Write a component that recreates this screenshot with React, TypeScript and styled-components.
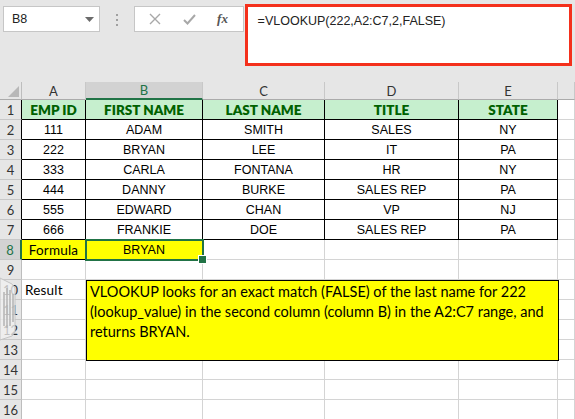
import type { FC, ReactElement } from "react";
import styled, { createGlobalStyle, css } from "styled-components";

const GlobalStyle = createGlobalStyle`
    * { box-sizing: border-box; }
    body {
        margin: 0;
        background: #ffffff;
        overflow: hidden;
        font-family: "Liberation Sans", Arial, sans-serif;
    }
`;

const GREEN = "#217346";
const GRID = "#d4d4d4";

const Page = styled.div`
    position: relative;
    width: 575px;
    height: 419px;
    overflow: hidden;
    background: #ffffff;
`;

const TopBar = styled.div`
    display: flex;
    align-items: flex-start;
    height: 82px;
    padding: 4px 3px 0 3px;
    background: #e6e6e6;
`;

const NameBox = styled.div`
    display: flex;
    align-items: center;
    justify-content: space-between;
    width: 97px;
    height: 26px;
    margin-top: 2px;
    padding: 0 5px 0 8px;
    background: #ffffff;
    border: 1px solid #c6c6c6;
    font-size: 12.5px;
    color: #222;
`;

const Dots = styled.div`
    display: flex;
    flex-direction: column;
    align-items: center;
    gap: 3px;
    width: 34px;
    margin-top: 10px;

    span {
        width: 2px;
        height: 2px;
        background: #a0a0a0;
    }
`;

const FxBox = styled.div`
    display: flex;
    align-items: center;
    justify-content: space-around;
    width: 110px;
    height: 26px;
    margin-top: 2px;
    padding: 0 4px;
    background: #ffffff;
    border: 1px solid #c6c6c6;
`;

const Fx = styled.span`
    font-family: "Liberation Serif", "Times New Roman", serif;
    font-style: italic;
    font-weight: 700;
    font-size: 13px;
    color: #555;
`;

const FormulaInput = styled.div`
    width: 328px;
    height: 62px;
    margin-left: 1px;
    padding: 7px 0 0 10px;
    background: #ffffff;
    border: 3px solid #f4301c;
    font-size: 12.5px;
    color: #222;
`;

const Sheet = styled.div`
    display: grid;
    grid-template-columns: 22px 64px 117px 122px 134px 99px 1fr;
    grid-template-rows: 18px;
    grid-auto-rows: 20px;
`;

const Corner = styled.div`
    position: relative;
    background: #e6e6e6;
    border-right: 1px solid #bdbdbd;
    border-bottom: 1px solid #ababab;

    &::after {
        content: "";
        position: absolute;
        right: 2px;
        bottom: 2px;
        border-left: 11px solid transparent;
        border-bottom: 11px solid #b8b8b8;
    }
`;

const ColHead = styled.div<{ $selected?: boolean }>`
    display: flex;
    align-items: center;
    justify-content: center;
    background: #e6e6e6;
    border-right: 1px solid #c8c8c8;
    border-bottom: 1px solid #ababab;
    font-family: Lato, "Liberation Sans", sans-serif;
    font-size: 13px;
    color: #333;

    ${({ $selected }) => $selected && css`
        background: #d2d2d2;
        color: ${GREEN};
        border-bottom: 2px solid ${GREEN};
    `}
`;

const RowHead = styled.div<{ $selected?: boolean; $edge?: boolean }>`
    display: flex;
    align-items: center;
    justify-content: center;
    background: #e6e6e6;
    border-right: 1px solid ${({ $edge }) => ($edge ? "#000" : "#bdbdbd")};
    border-bottom: 1px solid #c8c8c8;
    font-family: Lato, "Liberation Sans", sans-serif;
    font-size: 13px;
    color: #333;

    ${({ $selected }) => $selected && css`
        background: #d2d2d2;
        color: ${GREEN};
        border-right: 2px solid ${GREEN};
    `}
`;

type Tone = "plain" | "head" | "yellow";

const Cell = styled.div<{ $tone?: Tone; $edge?: boolean; $left?: boolean; $selected?: boolean; $label?: boolean }>`
    position: relative;
    display: flex;
    align-items: center;
    justify-content: ${({ $left }) => ($left ? "flex-start" : "center")};
    padding: 0 3px;
    border-right: 1px solid ${({ $edge }) => ($edge ? "#000" : GRID)};
    border-bottom: 1px solid ${({ $edge }) => ($edge ? "#000" : GRID)};
    font-size: 12.5px;
    color: #000;
    white-space: nowrap;
    background: ${({ $tone }) =>
        $tone === "head" ? "#c6efce" : $tone === "yellow" ? "#ffff00" : "#ffffff"};

    ${({ $label }) => $label && css`
        font-family: Lato, "Liberation Sans", sans-serif;
        font-size: 13.5px;
        letter-spacing: 0.2px;
    `}

    ${({ $tone }) => $tone === "head" && css`
        font-family: Lato, "Liberation Sans", sans-serif;
        font-weight: 800;
        font-size: 13.5px;
        color: #006100;
    `}

    ${({ $selected }) => $selected && css`
        z-index: 1;

        &::after {
            content: "";
            position: absolute;
            left: -1px;
            top: -1px;
            right: -2px;
            bottom: -2px;
            border: 2px solid ${GREEN};
        }

        &::before {
            content: "";
            position: absolute;
            right: -5px;
            bottom: -5px;
            width: 7px;
            height: 7px;
            background: ${GREEN};
            border: 1px solid #fff;
            z-index: 2;
        }
    `}
`;

const Note = styled.div`
    position: absolute;
    left: 86px;
    top: 280px;
    width: 473px;
    height: 81px;
    padding: 1px 3px;
    background: #ffff00;
    border: 1px solid #000;
    font-family: Lato, "Liberation Sans", sans-serif;
    font-size: 14.5px;
    line-height: 20px;
    color: #000;
`;

const PaneGrip = styled.svg`
    position: absolute;
    left: 0;
    top: 276px;
`;

const columns = ["A", "B", "C", "D", "E", ""];

const table: string[][] = [
    ["EMP ID", "FIRST NAME", "LAST NAME", "TITLE", "STATE"],
    ["111", "ADAM", "SMITH", "SALES", "NY"],
    ["222", "BRYAN", "LEE", "IT", "PA"],
    ["333", "CARLA", "FONTANA", "HR", "NY"],
    ["444", "DANNY", "BURKE", "SALES REP", "PA"],
    ["555", "EDWARD", "CHAN", "VP", "NJ"],
    ["666", "FRANKIE", "DOE", "SALES REP", "PA"],
];

const renderRow = (row: number): ReactElement[] => {
    const cells: ReactElement[] = [];
    const inTable = row <= table.length;

    cells.push(
        <RowHead key={`h${row}`} $edge={inTable} $selected={row === 8}>
            {row}
        </RowHead>
    );

    for (let c = 0; c < 6; c++) {
        const key = `${row}-${c}`;

        if (inTable && c < 5) {
            cells.push(
                <Cell key={key} $edge $tone={row === 1 ? "head" : "plain"}>
                    {table[row - 1][c]}
                </Cell>
            );
        } else if (row === 8 && c === 0) {
            cells.push(<Cell key={key} $tone="yellow" $edge $label>Formula</Cell>);
        } else if (row === 8 && c === 1) {
            cells.push(<Cell key={key} $tone="yellow" $selected>BRYAN</Cell>);
        } else if (row === 10 && c === 0) {
            cells.push(<Cell key={key} $left $label>Result</Cell>);
        } else {
            cells.push(<Cell key={key} />);
        }
    }

    return cells;
};

const App: FC = (): ReactElement => {

    const rows = Array.from({ length: 16 }, (_, i) => i + 1);

    return (
        <Page>
            <GlobalStyle />
            <TopBar>
                <NameBox>
                    <span>B8</span>
                    <svg width="9" height="5" viewBox="0 0 9 5">
                        <path d="M0 0 H9 L4.5 5 Z" fill="#6b6b6b" />
                    </svg>
                </NameBox>
                <Dots>
                    <span />
                    <span />
                    <span />
                </Dots>
                <FxBox>
                    <svg width="12" height="12" viewBox="0 0 12 12">
                        <path d="M1 1 L11 11 M11 1 L1 11" stroke="#a8a8a8" strokeWidth="1.4" />
                    </svg>
                    <svg width="13" height="11" viewBox="0 0 13 11">
                        <path d="M1 6 L4.5 9.5 L12 1" stroke="#a8a8a8" strokeWidth="2" fill="none" />
                    </svg>
                    <Fx>fx</Fx>
                </FxBox>
                <FormulaInput>=VLOOKUP(222,A2:C7,2,FALSE)</FormulaInput>
            </TopBar>

            <Sheet>
                <Corner />
                {columns.map((col) => (
                    <ColHead key={col || "F"} $selected={col === "B"}>{col}</ColHead>
                ))}
                {rows.map(renderRow)}
            </Sheet>

            <Note>
                VLOOKUP looks for an exact match (FALSE) of the last name for 222
                (lookup_value) in the second column (column B) in the A2:C7 range, and
                returns BRYAN.
            </Note>

            <PaneGrip width="17" height="66" viewBox="0 0 17 66">
                <path d="M0 2 L12 8 L15 12 L15 56 L12 60 L0 64 Z" fill="rgba(240,240,240,0.75)" stroke="#c4c4c4" />
                <path d="M4 16 V50 M7 12 V52 M10 14 V50 M13 18 V46" stroke="#b4b4b4" strokeWidth="1.5" />
            </PaneGrip>
        </Page>
    );

}

export default App;
